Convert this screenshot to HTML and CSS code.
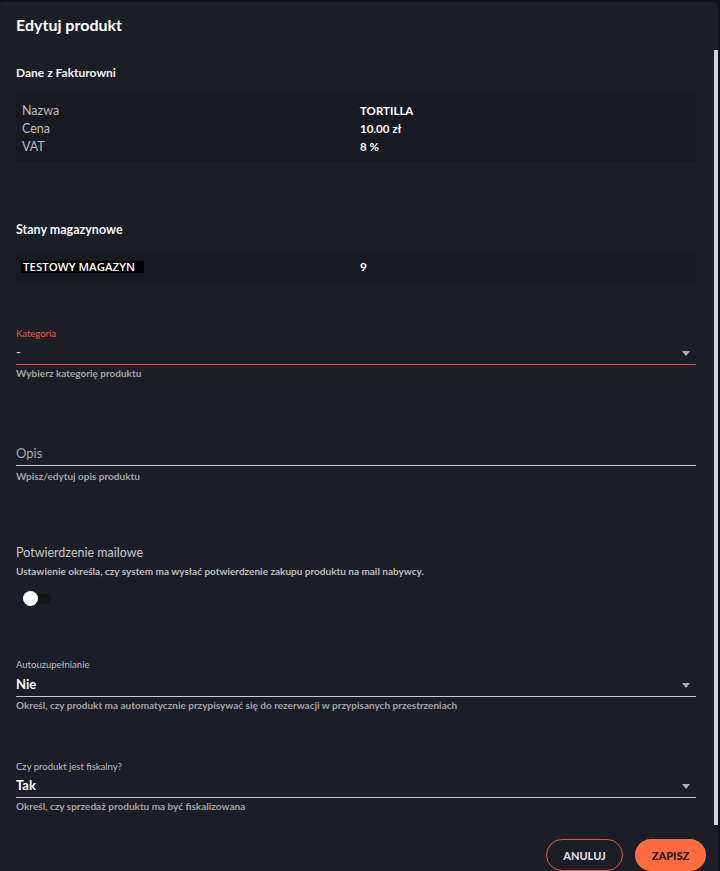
FILE: index.html
```html
<!DOCTYPE html>
<html lang="pl">
<head>
<meta charset="utf-8">
<title>Edytuj produkt</title>
<link rel="stylesheet" href="styles.css">
</head>
<body>
<div class="dialog">
  <div class="scroll-thumb"></div>
  <div class="content">
    <h1 class="title">Edytuj produkt</h1>

    <h2 class="section-title first">Dane z Fakturowni</h2>
    <div class="info-table">
      <div class="info-label">Nazwa</div><div class="info-value">TORTILLA</div>
      <div class="info-label">Cena</div><div class="info-value">10.00 zł</div>
      <div class="info-label">VAT</div><div class="info-value">8 %</div>
    </div>

    <h2 class="section-title stock-title">Stany magazynowe</h2>
    <div class="stock-row">
      <div class="stock-name"><span class="stock-tag">TESTOWY MAGAZYN</span></div>
      <div class="stock-qty">9</div>
    </div>

    <div class="field field-category">
      <div class="field-label focused">Kategoria</div>
      <div class="field-input focused">
        <span class="field-value">-</span>
        <span class="arrow"></span>
      </div>
      <div class="helper">Wybierz kategorię produktu</div>
    </div>

    <div class="field field-desc">
      <div class="field-input">
        <span class="placeholder">Opis</span>
      </div>
      <div class="helper helper-desc">Wpisz/edytuj opis produktu</div>
    </div>

    <div class="switch-block">
      <div class="switch-title">Potwierdzenie mailowe</div>
      <div class="switch-desc">Ustawienie określa, czy system ma wysłać potwierdzenie zakupu produktu na mail nabywcy.</div>
      <div class="switch">
        <span class="switch-track"></span>
        <span class="switch-knob"></span>
      </div>
    </div>

    <div class="field field-auto">
      <div class="field-label">Autouzupełnianie</div>
      <div class="field-input">
        <span class="field-value strong">Nie</span>
        <span class="arrow"></span>
      </div>
      <div class="helper">Określ, czy produkt ma automatycznie przypisywać się do rezerwacji w przypisanych przestrzeniach</div>
    </div>

    <div class="field field-fiscal">
      <div class="field-label">Czy produkt jest fiskalny?</div>
      <div class="field-input">
        <span class="field-value strong">Tak</span>
        <span class="arrow"></span>
      </div>
      <div class="helper">Określ, czy sprzedaż produktu ma być fiskalizowana</div>
    </div>

    <div class="actions">
      <button class="btn btn-outline">ANULUJ</button>
      <button class="btn btn-primary">ZAPISZ</button>
    </div>
  </div>
</div>
</body>
</html>
```
FILE: styles.css
```css
* { box-sizing: border-box; }

html, body {
  margin: 0;
  padding: 0;
  height: 871px;
  overflow: hidden;
  background: #111317;
}

body {
  font-family: "Lato", "Noto Sans", sans-serif;
  color: #ffffff;
}

.dialog {
  position: relative;
  width: 718px;
  height: 869px;
  margin-top: 2px;
  background: #1b1e26;
  border-radius: 4px 4px 0 0;
  overflow: hidden;
}

.scroll-thumb {
  position: absolute;
  left: 714px;
  top: 48px;
  width: 4px;
  height: 775px;
  background: #d2d5dc;
}

.content {
  padding: 13px 22px 0 16px;
}

.title {
  margin: 0;
  font-size: 16px;
  line-height: 20px;
  font-weight: 700;
  color: #ffffff;
}

.section-title {
  margin: 0;
  font-size: 12px;
  line-height: 16px;
  font-weight: 700;
  color: #f2f2f2;
}

.section-title.first { margin-top: 30px; }
.section-title.stock-title { margin-top: 60px; font-size: 12.5px; }

.info-table {
  margin-top: 14px;
  background: #171a20;
  padding: 7px 6px 6px 6px;
  display: grid;
  grid-template-columns: 338px 1fr;
  font-size: 12px;
  line-height: 18px;
}

.info-label { color: #bdbdbd; font-size: 12.5px; }
.info-value { color: #ffffff; font-weight: 700; font-size: 11.5px; }

.stock-row {
  margin-top: 13px;
  height: 30px;
  background: #171a20;
  padding-left: 5px;
  display: grid;
  grid-template-columns: 339px 1fr;
  align-items: center;
  font-size: 12px;
}

.stock-tag {
  display: inline-block;
  background: #000000;
  color: #ffffff;
  font-family: "Open Sans", "Noto Sans", sans-serif;
  font-weight: 600;
  font-size: 11.5px;
  line-height: 12px;
  padding: 0 9px 0 2px;
}

.stock-qty { font-weight: 700; color: #ffffff; }

.field-label {
  font-size: 9.5px;
  line-height: 12px;
  color: #bdbdbd;
}

.field-label.focused { color: #f4583a; }

.field-input {
  position: relative;
  height: 22px;
  padding-bottom: 3px;
  border-bottom: 1px solid #c9c9c9;
  display: flex;
  align-items: center;
}

.field-input.focused { border-bottom-color: #f4583a; }

.field-value {
  font-size: 13px;
  line-height: 18px;
  color: #ffffff;
}

.field-value.strong { font-weight: 700; }

.placeholder {
  font-size: 13px;
  line-height: 18px;
  color: #a9a9a9;
}

.arrow {
  position: absolute;
  right: 6px;
  top: 8px;
  width: 0;
  height: 0;
  border-left: 4.5px solid transparent;
  border-right: 4.5px solid transparent;
  border-top: 5px solid #b0b0b0;
}

.helper {
  margin-top: 2px;
  font-size: 10px;
  line-height: 12px;
  font-weight: 700;
  color: #a3a3a3;
}

.helper-desc { margin-top: 4px; }

.field-category { margin-top: 47px; }
.field-category .field-label { margin-bottom: 3px; }
.field-desc { margin-top: 65px; }
.field-auto { margin-top: 53px; }
.field-auto .field-label { margin-bottom: 4px; }
.field-fiscal { margin-top: 50px; }
.field-fiscal .field-label { margin-bottom: 3px; }

.switch-block { margin-top: 63px; }

.switch-title {
  font-size: 12.5px;
  line-height: 16px;
  color: #c9c9c9;
}

.switch-desc {
  margin-top: 4px;
  font-size: 10px;
  line-height: 12px;
  font-weight: 700;
  color: #bdbdbd;
}

.switch {
  position: relative;
  margin-top: 14px;
  margin-left: 7px;
  width: 28px;
  height: 15px;
}

.switch-track {
  position: absolute;
  left: 8px;
  top: 3px;
  width: 20px;
  height: 10px;
  border-radius: 5px;
  background: #13151a;
}

.switch-knob {
  position: absolute;
  left: 0;
  top: 0;
  width: 15px;
  height: 15px;
  border-radius: 50%;
  background: #ffffff;
}

.actions {
  margin-top: 27px;
  display: flex;
  justify-content: flex-end;
  gap: 12px;
  padding-right: 12px;
  margin-right: -22px;
}

.btn {
  height: 32px;
  border-radius: 16px;
  font-family: "Lato", "Noto Sans", sans-serif;
  font-weight: 900;
  font-size: 11px;
  letter-spacing: 0;
  cursor: pointer;
}

.btn-outline {
  width: 77px;
  background: transparent;
  border: 1px solid #e8583a;
  color: #dcdcdc;
}

.btn-primary {
  width: 71px;
  background: #ff6a3e;
  border: none;
  color: #1b1e26;
}
```
